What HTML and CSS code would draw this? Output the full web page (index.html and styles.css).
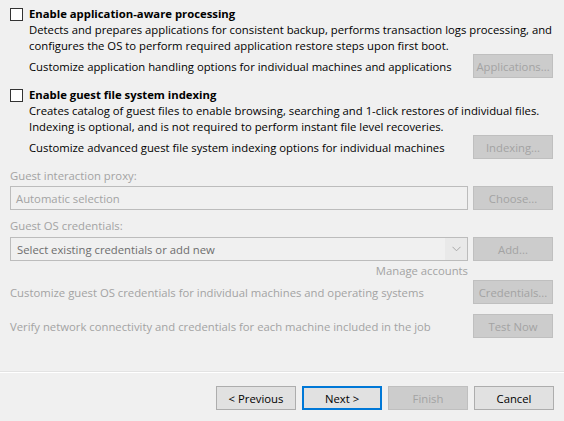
FILE: index.html
```html
<!DOCTYPE html>
<html>
<head>
<meta charset="utf-8">
<link rel="stylesheet" href="styles.css">
</head>
<body>
<div class="page">
  <div class="main">
    <div class="option">
      <div class="check-row">
        <span class="checkbox"></span>
        <span class="title">Enable application-aware processing</span>
      </div>
      <div class="desc">
        <div class="line">Detects and prepares applications for consistent backup, performs transaction logs processing, and</div>
        <div class="line">configures the OS to perform required application restore steps upon first boot.</div>
        <div class="row">
          <span class="row-text">Customize application handling options for individual machines and applications</span>
          <span class="btn disabled">Applications...</span>
        </div>
      </div>
    </div>
    <div class="option second">
      <div class="check-row">
        <span class="checkbox"></span>
        <span class="title">Enable guest file system indexing</span>
      </div>
      <div class="desc">
        <div class="line">Creates catalog of guest files to enable browsing, searching and 1-click restores of individual files.</div>
        <div class="line">Indexing is optional, and is not required to perform instant file level recoveries.</div>
        <div class="row">
          <span class="row-text">Customize advanced guest file system indexing options for individual machines</span>
          <span class="btn disabled">Indexing...</span>
        </div>
      </div>
    </div>

    <div class="label gray proxy-label">Guest interaction proxy:</div>
    <div class="field-row">
      <div class="input disabled-input">Automatic selection</div>
      <span class="btn disabled">Choose...</span>
    </div>

    <div class="label gray cred-label">Guest OS credentials:</div>
    <div class="field-row select-row">
      <div class="input select">
        <span class="select-text">Select existing credentials or add new</span>
        <span class="chevron"><svg width="9" height="6" viewBox="0 0 9 6"><path d="M0.5 0.8 L4.5 4.8 L8.5 0.8" fill="none" stroke="#a8a8a8" stroke-width="1"/></svg></span>
      </div>
      <span class="btn disabled">Add...</span>
    </div>
    <div class="manage-row"><span class="gray manage">Manage accounts</span></div>

    <div class="row wide">
      <span class="row-text gray">Customize guest OS credentials for individual machines and operating systems</span>
      <span class="btn disabled">Credentials...</span>
    </div>
    <div class="row wide test-row">
      <span class="row-text gray">Verify network connectivity and credentials for each machine included in the job</span>
      <span class="btn disabled">Test Now</span>
    </div>
  </div>
  <div class="footer">
    <span class="btn">&lt; Previous</span>
    <span class="btn primary">Next &gt;</span>
    <span class="btn disabled">Finish</span>
    <span class="btn">Cancel</span>
  </div>
</div>
</body>
</html>
```

FILE: styles.css
```css
html, body {
  margin: 0;
  padding: 0;
  background: #f0f0f0;
}
body {
  font-family: "Open Sans", "Noto Sans", "Liberation Sans", sans-serif;
  font-size: 11.3px;
  color: #000;
  width: 564px;
  height: 421px;
  overflow: hidden;
}
.page {
  display: flex;
  flex-direction: column;
  height: 421px;
}
.main {
  padding: 6px 11px 0 10px;
  flex: 1;
}
.check-row {
  display: flex;
  align-items: center;
  height: 16px;
}
.checkbox {
  width: 11px;
  height: 11px;
  border: 1px solid #333;
  background: #fff;
  margin-right: 6px;
  flex: none;
}
.title {
  font-weight: 700;
  line-height: 16px;
}
.desc {
  padding-left: 19px;
}
.line {
  line-height: 16px;
  white-space: nowrap;
}
.row {
  display: flex;
  align-items: center;
  justify-content: space-between;
  height: 24px;
}
.row-text {
  white-space: nowrap;
}
.second {
  margin-top: 9px;
}
.btn {
  box-sizing: border-box;
  width: 80px;
  height: 24px;
  display: inline-flex;
  align-items: center;
  justify-content: center;
  background: #e1e1e1;
  border: 1px solid #adadad;
  white-space: nowrap;
  flex: none;
}
.btn.disabled {
  background: #cccccc;
  border-color: #bfbfbf;
  color: #a3a3a3;
}
.btn.primary {
  border: 2px solid #0078d7;
}
.gray {
  color: #a3a3a3;
}
.label {
  line-height: 16px;
}
.proxy-label {
  margin-top: 9px;
}
.field-row {
  display: flex;
  justify-content: space-between;
  margin-top: 2px;
}
.input {
  box-sizing: border-box;
  width: 458px;
  height: 24px;
  border: 1px solid #bcbcbc;
  display: flex;
  align-items: center;
  padding-left: 5px;
}
.disabled-input {
  background: #f0f0f0;
  color: #a3a3a3;
}
.cred-label {
  margin-top: 8px;
}
.select-row {
  margin-top: 3px;
}
.select {
  padding-left: 6px;
  padding-right: 0;
  justify-content: space-between;
  background: #f0f0f0;
  color: #6d6d6d;
}
.chevron {
  width: 22px;
  height: 22px;
  display: flex;
  align-items: center;
  justify-content: center;
  background: #e9e9e9;
}
.manage-row {
  display: flex;
  width: 458px;
  justify-content: flex-end;
  line-height: 16px;
  margin-top: 2px;
}
.wide {
  margin-top: 1px;
}
.test-row {
  margin-top: 10px;
}
.footer {
  border-top: 1px solid #fff;
  box-shadow: 0 -1px 0 #e3e3e3;
  display: flex;
  justify-content: flex-end;
  gap: 6px;
  padding: 13px 10px 11px 0;
}
```
